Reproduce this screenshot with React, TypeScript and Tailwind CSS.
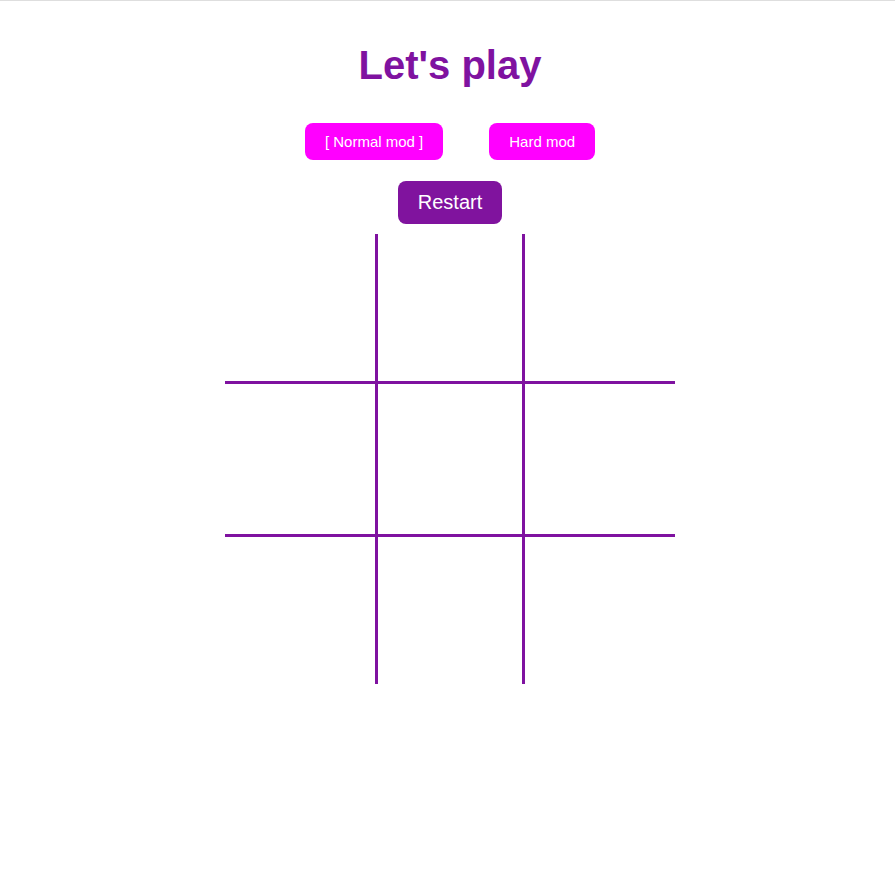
export default function App() {
  const cells = [
    "border-b-[3px]",
    "border-b-[3px] border-x-[3px]",
    "border-b-[3px]",
    "",
    "border-x-[3px]",
    "",
    "border-t-[3px]",
    "border-t-[3px] border-x-[3px]",
    "border-t-[3px]",
  ];
  return (
    <div className="min-h-[895px] border-t border-[#dedede] bg-white pl-[5px] font-['Liberation_Sans',Arial,sans-serif]">
      <div className="flex flex-col items-center">
        <h1 className="mt-[41px] text-[40px] font-bold leading-[46px] text-[#7f12a0]">Let's play</h1>
        <div className="mt-[35px] flex gap-[46px]">
          <button className="rounded-lg bg-[#ff00ff] px-5 py-[10px] text-[15px] leading-[17px] text-white">
            [ Normal mod ]
          </button>
          <button className="rounded-lg bg-[#ff00ff] px-5 py-[10px] text-[15px] leading-[17px] text-white">
            Hard mod
          </button>
        </div>
        <button className="mt-[21px] rounded-lg bg-[#80139e] px-5 py-[10px] text-[20px] leading-[23px] text-white">
          Restart
        </button>
        <div className="mt-[10px] grid w-[450px] grid-cols-3">
          {cells.map((c, i) => (
            <div key={i} className={`h-[150px] border-[#7f12a0] ${c}`} />
          ))}
        </div>
      </div>
    </div>
  );
}
